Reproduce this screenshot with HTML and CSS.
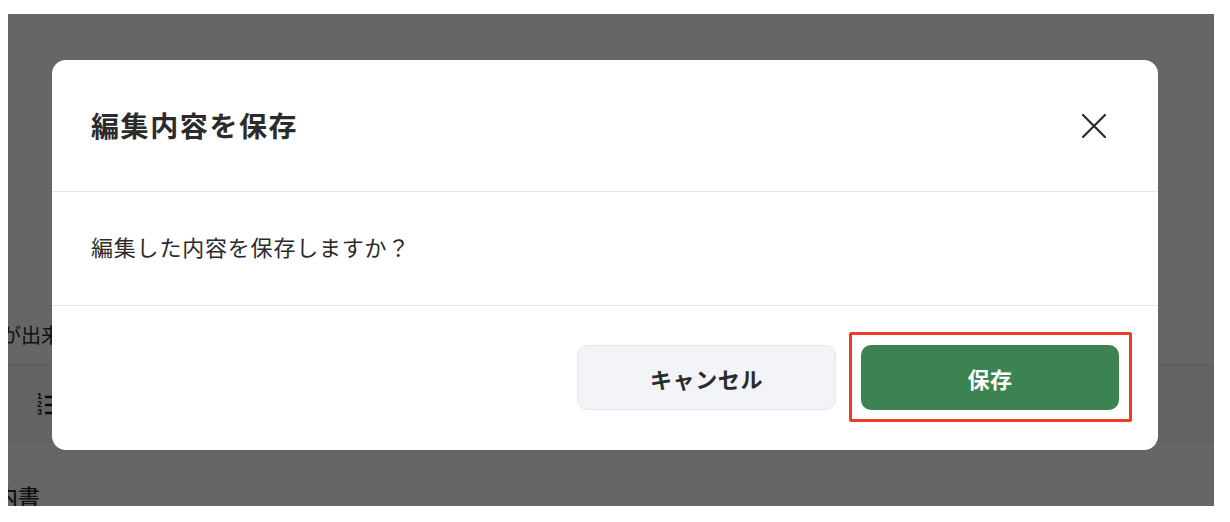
FILE: index.html
```html
<!DOCTYPE html>
<html lang="ja">
<head>
  <title>編集内容を保存</title>
  <link rel="stylesheet" href="styles.css">
</head>
<body>
  <div class="screen">
    <div class="page">
      <p class="page-text">が出来ます</p>
      <div class="toolbar">
        <svg class="list-icon" width="16" height="24" viewBox="0 0 16 24">
          <text x="0" y="7" class="list-num">1</text>
          <text x="0" y="15" class="list-num">2</text>
          <text x="0" y="23" class="list-num">3</text>
          <path d="M8 5h8M8 13h8M8 21h8" stroke="#1c1c1c" stroke-width="2.4" fill="none"/>
        </svg>
      </div>
      <p class="page-heading">内書</p>
    </div>
    <div class="overlay">
      <div class="modal">
        <div class="modal-header">
          <h2 class="modal-title">編集内容を保存</h2>
          <svg class="close-icon" width="24" height="24" viewBox="0 0 24 24">
            <path d="M1 1l22 22M23 1L1 23" stroke="#2b2b2b" stroke-width="2.2" stroke-linecap="round" fill="none"/>
          </svg>
        </div>
        <div class="modal-body">編集した内容を保存しますか？</div>
        <div class="modal-footer">
          <button class="btn btn-cancel">キャンセル</button>
          <div class="save-wrap">
            <button class="btn btn-save">保存</button>
            <div class="highlight"></div>
          </div>
        </div>
      </div>
    </div>
  </div>
</body>
</html>
```

FILE: styles.css
```css
html, body {
  margin: 0;
  padding: 0;
  background: #fff;
}

body {
  height: 522px;
  overflow: hidden;
  font-family: "Noto Sans CJK JP", "Noto Sans", sans-serif;
  color: #2b2b2b;
}

.screen {
  position: relative;
  margin: 14px 16px 0 8px;
  height: 492px;
  overflow: hidden;
  background: #fff;
}

.page {
  padding-top: 306px;
}

.page-text {
  margin: 0;
  height: 44px;
  line-height: 30px;
  font-size: 20px;
  white-space: nowrap;
  text-indent: -7px;
}

.toolbar {
  height: 79px;
  border-top: 1px solid #e4e4e4;
  border-bottom: 1px solid #f4f4f4;
  background: #f8f8f8;
  padding-left: 29px;
  padding-top: 27px;
  box-sizing: border-box;
}

.list-icon {
  display: block;
}

.list-num {
  font-family: "Liberation Sans", sans-serif;
  font-size: 9px;
  font-weight: 700;
  fill: #1c1c1c;
}

.page-heading {
  margin: 0;
  padding-top: 37px;
  font-size: 22px;
  font-weight: 500;
  line-height: 30px;
  white-space: nowrap;
  text-indent: -12px;
}

.overlay {
  position: absolute;
  inset: 0;
  padding: 46px 56px 0 44px;
  background: rgba(0, 0, 0, 0.6);
}

.modal {
  background: #fff;
  border-radius: 14px;
  height: 390px;
  display: flex;
  flex-direction: column;
}

.modal-header {
  height: 132px;
  box-sizing: border-box;
  border-bottom: 1px solid #e6e6e6;
  padding: 0 52px 2px 39px;
  display: flex;
  align-items: center;
  justify-content: space-between;
}

.modal-title {
  margin: 0;
  font-size: 28px;
  font-weight: 700;
  letter-spacing: 1.6px;
  line-height: 40px;
}

.close-icon {
  position: relative;
  top: 1px;
}

.modal-body {
  height: 114px;
  box-sizing: border-box;
  border-bottom: 1px solid #e6e6e6;
  padding: 0 39px 5px;
  display: flex;
  align-items: center;
  font-size: 22px;
  letter-spacing: 0.8px;
}

.modal-footer {
  flex: 1;
  display: flex;
  align-items: flex-start;
  justify-content: flex-end;
  gap: 25px;
  padding: 39px 39px 0 0;
}

.btn {
  display: block;
  height: 65px;
  border-radius: 10px;
  font-family: inherit;
  font-size: 22px;
  font-weight: 700;
  letter-spacing: 0.6px;
  padding: 0;
}

.btn-cancel {
  width: 259px;
  background: #f3f4f8;
  border: 1px solid #e6e7ee;
  color: #2b2b2b;
}

.btn-save {
  width: 258px;
  background: #3c8351;
  border: 0;
  color: #fff;
}

.save-wrap {
  position: relative;
}

.highlight {
  position: absolute;
  inset: -13px -13px -12px -12px;
  border: 3px solid #ee3b2c;
  border-radius: 2px;
}
```
